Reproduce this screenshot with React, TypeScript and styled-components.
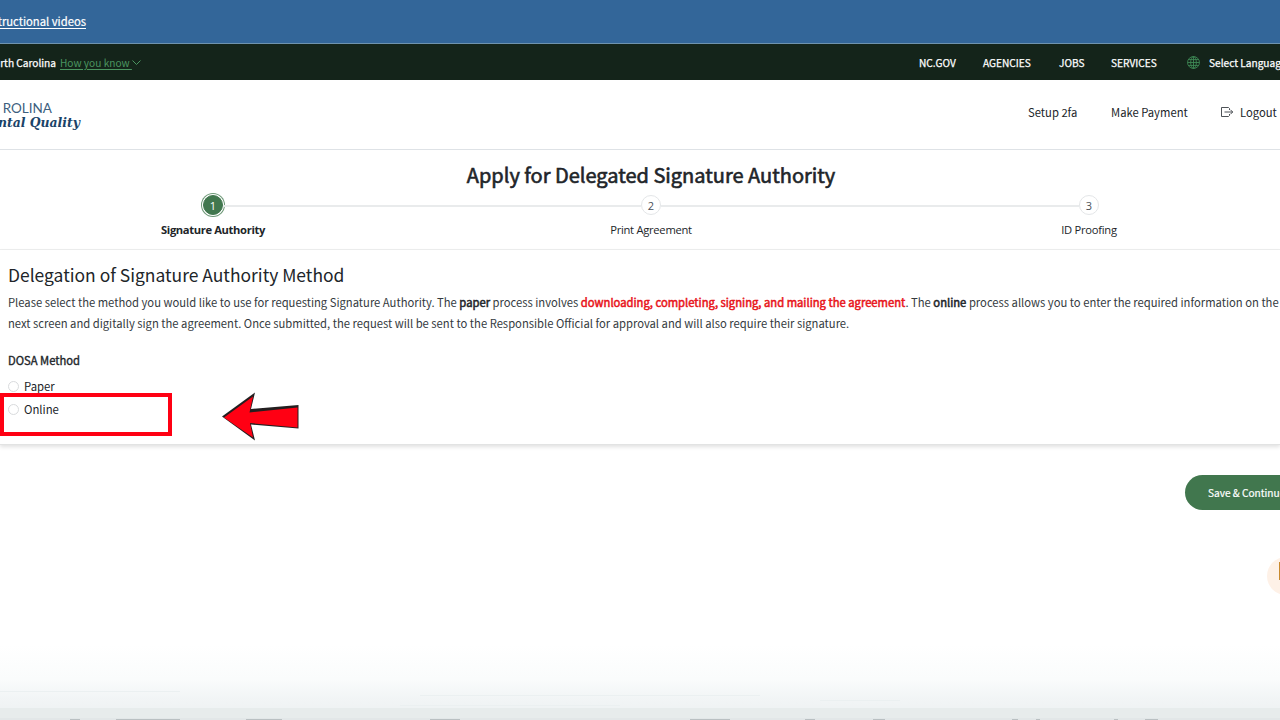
import React from "react";
import styled, { createGlobalStyle } from "styled-components";

const sans = `"Noto Sans CJK SC", "Noto Sans", sans-serif`;

const Global = createGlobalStyle`
  * { box-sizing: border-box; }
  body { margin: 0; background: #fff; font-family: ${sans}; color: #212529; overflow: hidden; }
`;

const Page = styled.div`
  width: 1280px;
  height: 720px;
  display: flex;
  flex-direction: column;
  overflow: hidden;
  background: #fff;
`;

const Clip = styled.div<{ $w: number }>`
  width: ${(p) => p.$w}px;
  flex: none;
  display: flex;
  justify-content: flex-end;
  white-space: nowrap;
`;

const Banner = styled.div`
  height: 44px;
  flex: none;
  display: flex;
  align-items: center;
  background: #336699;
  border-bottom: 1px solid #6f93ae;
  padding-bottom: 2px;
`;

const BannerLink = styled.a`
  color: #fff;
  font-size: 11.25px;
  line-height: 20px;
  -webkit-text-stroke: 0.2px;
  text-decoration: underline;
  text-underline-offset: 2px;
`;

const StateBar = styled.div`
  height: 36px;
  flex: none;
  display: flex;
  align-items: center;
  padding-top: 1px;
  background: #14241a;
  color: #fff;
  font-size: 10.15px;
  line-height: 18px;
  white-space: nowrap;
  -webkit-text-stroke: 0.25px;
`;

const HowLink = styled.a`
  margin-left: 4px;
  color: #4b9560;
  -webkit-text-stroke: 0;
  text-decoration: underline;
  text-underline-offset: 2px;
  white-space: pre;
`;

const StateNav = styled.nav`
  margin-left: auto;
  display: flex;
  align-items: center;
  width: 361px;
`;

const StateItem = styled.span<{ $w: number }>`
  flex: none;
  width: ${(p) => p.$w}px;
`;

const Globe = styled.svg`
  flex: none;
  width: 13px;
  height: 13px;
  margin: 0 9px 1px 0;
`;

const Header = styled.header`
  height: 70px;
  flex: none;
  display: flex;
  align-items: center;
  justify-content: space-between;
  border-bottom: 1px solid #dee2e6;
  padding-bottom: 4px;
`;

const Logo = styled.div`
  display: flex;
  flex-direction: column;
  padding-top: 5px;
`;

const LogoTop = styled.span`
  font: 400 13.5px/13px Lato, sans-serif;
  color: #3d5f7e;
`;

const LogoBottom = styled.span`
  font: italic 700 13.8px/14px "DejaVu Serif", serif;
  font-stretch: condensed;
  color: #1b4368;
`;

const UserNav = styled.nav`
  width: 252px;
  display: flex;
  align-items: center;
  font-size: 11.25px;
  line-height: 20px;
  white-space: nowrap;
  color: #212529;
  padding-bottom: 1px;
`;

const UserItem = styled.span<{ $w: number }>`
  flex: none;
  width: ${(p) => p.$w}px;
`;

const LogoutIcon = styled.svg`
  flex: none;
  width: 14px;
  height: 12px;
  margin-right: 6px;
`;

const Wizard = styled.section`
  height: 100px;
  flex: none;
  padding: 10px 0 0 22px;
  border-bottom: 1px solid #eeefef;
  background: #fff;
`;

const Title = styled.h1`
  margin: 0;
  font-size: 20px;
  line-height: 30px;
  font-weight: 400;
  -webkit-text-stroke: 0.6px;
  text-align: center;
  white-space: nowrap;
`;

const Steps = styled.ol`
  list-style: none;
  display: flex;
  width: 1314px;
  margin: 3px 0 0 -28px;
  padding: 0;
`;

const Step = styled.li`
  flex: 1;
  display: grid;
  grid-template-columns: 1fr auto 1fr;
  align-items: center;
  &::before, &::after {
    content: "";
    height: 2px;
    margin-top: 1px;
    background: #e9ebec;
  }
  &:first-child::before, &:last-child::after { background: transparent; }
`;

const Dot = styled.span<{ $active?: boolean }>`
  width: 20px;
  height: 20px;
  margin: 2px 0;
  border-radius: 50%;
  display: flex;
  align-items: center;
  justify-content: center;
  font: 400 11px/18px "Open Sans", sans-serif;
  padding-top: 1px;
  background: ${(p) => (p.$active ? "#41774e" : "#fff")};
  color: ${(p) => (p.$active ? "#fff" : "#495057")};
  border: 1px solid ${(p) => (p.$active ? "#41774e" : "#e4e6e8")};
  ${(p) => p.$active && "box-shadow: 0 0 0 1px #fff, 0 0 0 2px #6d9877;"}
`;

const StepLabel = styled.span<{ $active?: boolean }>`
  grid-column: 1 / -1;
  grid-row: 2;
  margin-top: 4px;
  text-align: center;
  white-space: nowrap;
  font: ${(p) => (p.$active ? 700 : 400)} 11.2px/18px "Open Sans", sans-serif;
  letter-spacing: ${(p) => (p.$active ? -0.36 : -0.27)}px;
`;

const Card = styled.main`
  position: relative;
  height: 195px;
  flex: none;
  padding: 11px 0 0 8px;
  border-bottom: 1px solid #e2e3e3;
  box-shadow: 0 2px 4px rgba(0, 0, 0, 0.12);
`;

const Heading = styled.h2`
  margin: 0 0 4px;
  font-size: 17.45px;
  line-height: 27px;
  font-weight: 400;
`;

const Line = styled.p`
  margin: 0;
  font-size: 11.245px;
  line-height: 21px;
  white-space: nowrap;
  color: #343a40;
`;

const Strong = styled.b<{ $red?: boolean }>`
  font-weight: 400;
  -webkit-text-stroke: 0.5px;
  color: ${(p) => (p.$red ? "#e8141a" : "#212529")};
`;

const Field = styled.div`
  margin: 16px 0 4px;
  font-size: 11.23px;
  line-height: 20px;
  -webkit-text-stroke: 0.35px;
`;

const Option = styled.label`
  display: flex;
  align-items: center;
  gap: 5px;
  height: 23px;
  font-size: 11.35px;
  line-height: 20px;
`;

const Radio = styled.span`
  width: 11px;
  height: 11px;
  margin-top: 1px;
  border: 1px solid #d9dbdd;
  border-radius: 50%;
`;

const Highlight = styled.div`
  position: absolute;
  left: 0;
  top: 143px;
  width: 172px;
  height: 43px;
  border: 4px solid #ff0013;
`;

const Arrow = styled.svg`
  position: absolute;
  left: 220px;
  top: 140px;
  width: 80px;
  height: 52px;
`;

const Actions = styled.div`
  display: flex;
  flex: none;
  margin-top: 30px;
  padding-left: 1185px;
`;

const SaveButton = styled.button`
  flex: none;
  width: 120px;
  height: 35px;
  border: 0;
  border-radius: 18px;
  padding: 0 0 0 23px;
  background: #41774e;
  color: #fff;
  font: 400 10.15px/18px ${sans};
  -webkit-text-stroke: 0.2px;
  text-align: left;
  white-space: nowrap;
`;

const ChatRow = styled.div`
  display: flex;
  flex: none;
  margin-top: 47px;
  padding-left: 1267px;
`;

const Chat = styled.div`
  flex: none;
  width: 38px;
  height: 38px;
  border-radius: 50%;
  background: #fef1e7;
  padding: 5px 0 0 12px;
`;

const ChatIcon = styled.div`
  width: 14px;
  height: 18px;
  background: #c98a2e;
`;

const Scenery = styled.svg`
  display: block;
  flex: none;
  width: 1280px;
  height: 75px;
  margin-top: auto;
`;

export default function App() {
  return (
    <Page>
      <Global />
      <Banner>
        <Clip $w={86}><BannerLink>tructional videos</BannerLink></Clip>
      </Banner>
      <StateBar>
        <Clip $w={56}>rth Carolina</Clip>
        <HowLink>{"How you know "}</HowLink>
        <svg width="11" height="8" viewBox="0 0 11 8">
          <path d="M0.500 1.500L4.500 5.500L8.500 1.500" fill="none" stroke="#4b9560" />
        </svg>
        <StateNav>
          <StateItem $w={64}>NC.GOV</StateItem>
          <StateItem $w={76}>AGENCIES</StateItem>
          <StateItem $w={52}>JOBS</StateItem>
          <StateItem $w={76}>SERVICES</StateItem>
          <Globe viewBox="0 0 12 12" fill="none" stroke="#3f8a56" strokeWidth="0.8">
            <circle cx="6" cy="6" r="5.5" />
            <ellipse cx="6" cy="6" rx="2.6" ry="5.5" />
            <path d="M6 .5v11M.5 6h11M1.3 3.3h9.4M1.3 8.7h9.4" />
          </Globe>
          <StateItem $w={90}>Select Language</StateItem>
        </StateNav>
      </StateBar>
      <Header>
        <Logo>
          <Clip $w={52}><LogoTop>ROLINA</LogoTop></Clip>
          <Clip $w={80}><LogoBottom>ntal Quality</LogoBottom></Clip>
        </Logo>
        <UserNav>
          <UserItem $w={83}>Setup 2fa</UserItem>
          <UserItem $w={109}>Make Payment</UserItem>
          <LogoutIcon viewBox="0 0 14 12" fill="none" stroke="#3b4045" strokeWidth="0.9">
            <path d="M9.500 4V2.500L8.500 1.500H1.500V10.500H8.500L9.500 9.500V8M4.500 6H12.700M10.500 3.800L12.700 6L10.500 8.200" />
          </LogoutIcon>
          <span>Logout</span>
        </UserNav>
      </Header>
      <Wizard>
        <Title>Apply for Delegated Signature Authority</Title>
        <Steps>
          <Step><Dot $active>1</Dot><StepLabel $active>Signature Authority</StepLabel></Step>
          <Step><Dot>2</Dot><StepLabel>Print Agreement</StepLabel></Step>
          <Step><Dot>3</Dot><StepLabel>ID Proofing</StepLabel></Step>
        </Steps>
      </Wizard>
      <Card>
        <Heading>Delegation of Signature Authority Method</Heading>
        <Line>
          Please select the method you would like to use for requesting Signature Authority. The <Strong>paper</Strong> process involves{" "}
          <Strong $red>downloading, completing, signing, and mailing the agreement</Strong>. The <Strong>online</Strong> process allows you to enter the required information on the
        </Line>
        <Line>
          next screen and digitally sign the agreement. Once submitted, the request will be sent to the Responsible Official for approval and will also require their signature.
        </Line>
        <Field>DOSA Method</Field>
        <Option><Radio />Paper</Option>
        <Option><Radio />Online</Option>
        <Highlight />
        <Arrow viewBox="0 0 80 52">
          <path d="M2 26.500L35 2.500L31 19L78.500 15V38.500L31 34.500L35 50.500Z" fill="#231f20" />
          <path d="M4 27.500L33 6.500L29.500 22.500L77.500 17.500V37.500L30 33L33 47.500Z" fill="#ff0013" />
        </Arrow>
      </Card>
      <Actions><SaveButton>Save &amp; Continue</SaveButton></Actions>
      <ChatRow><Chat><ChatIcon /></Chat></ChatRow>
      <Scenery viewBox="0 0 1280 75" preserveAspectRatio="none">
        <defs>
          <linearGradient id="mist" x1="0" y1="0" x2="0" y2="1">
            <stop offset="0" stopColor="#ffffff" />
            <stop offset="0.45" stopColor="#fafcfc" />
            <stop offset="0.7" stopColor="#f2f5f6" />
            <stop offset="1" stopColor="#ecf0f1" />
          </linearGradient>
        </defs>
        <rect width="1280" height="75" fill="url(#mist)" />
        <rect y="63" width="1280" height="10" fill="#e7ecec" />
        <path d="M0 46.500H180M420 50.500H760M400 60.500H620M820 55.500H900" stroke="#ebf0f1" strokeWidth="1" />
        <rect y="73" width="1280" height="2" fill="#e2e7e8" />
        <path d="M70 74.500H80M116 74.500H180M246 74.500H282M430 74.500H460M690 74.500H730M805 74.500H815M873 74.500H885M1012 74.500H1018M1036 74.500H1040M1114 74.500H1118M1145 74.500H1158" stroke="#b9c0c2" strokeWidth="1" />
      </Scenery>
    </Page>
  );
}
